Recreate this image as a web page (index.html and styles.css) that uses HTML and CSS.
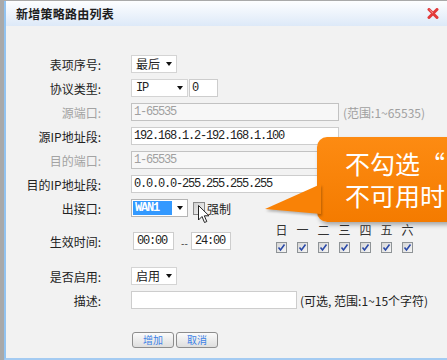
FILE: index.html
```html
<!DOCTYPE html>
<html lang="zh-CN">
<head>
    <meta charset="UTF-8">
    <title>新增策略路由列表</title>
    <link rel="stylesheet" href="styles.css">
</head>
<body>

<div class="dialog">
    <div class="titlebar">
        <span class="title">新增策略路由列表</span>
        <svg class="close" width="12" height="11" viewBox="0 0 12 11">
            <path d="M2 1.5 L10 9.5 M10 1.5 L2 9.5" stroke="#e23a3a" stroke-width="3" stroke-linecap="round"/>
            <path d="M2.5 1.8 L6 5.2" stroke="#f59a9a" stroke-width="1"/>
        </svg>
    </div>

    <div class="form">
        <div class="row">
            <label class="lbl">表项序号:</label>
            <div class="select w46"><span>最后</span><i class="caret"></i></div>
        </div>
        <div class="row">
            <label class="lbl">协议类型:</label>
            <div class="select w57"><span class="mono">IP</span><i class="caret"></i></div>
            <input class="field w29" type="text" value="0">
        </div>
        <div class="row">
            <label class="lbl off">源端口:</label>
            <input class="field w208" type="text" value="1-65535" disabled>
            <span class="hint">(范围:1~65535)</span>
        </div>
        <div class="row">
            <label class="lbl">源IP地址段:</label>
            <input class="field w208" type="text" value="192.168.1.2-192.168.1.100">
        </div>
        <div class="row">
            <label class="lbl off">目的端口:</label>
            <input class="field w208" type="text" value="1-65535" disabled>
        </div>
        <div class="row">
            <label class="lbl">目的IP地址段:</label>
            <input class="field w208" type="text" value="0.0.0.0-255.255.255.255">
        </div>
        <div class="row">
            <label class="lbl">出接口:</label>
            <div class="select w57 active"><span class="mono picked">WAN1</span><i class="caret"></i></div>
            <span class="box"></span>
            <span class="force">强制</span>
        </div>

        <div class="row time-row">
            <label class="lbl">生效时间:</label>
            <input class="field time" type="text" value="00:00">
            <span class="dash">--</span>
            <input class="field time" type="text" value="24:00">
            <div class="days">
                <span>日</span><span>一</span><span>二</span><span>三</span><span>四</span><span>五</span><span>六</span>
                <i class="chk"><svg width="9" height="9" viewBox="0 0 9 9"><path d="M1.5 4.5 L3.5 7 L7.5 1.5" fill="none" stroke="#2b4aa8" stroke-width="1.6"/></svg></i>
                <i class="chk"><svg width="9" height="9" viewBox="0 0 9 9"><path d="M1.5 4.5 L3.5 7 L7.5 1.5" fill="none" stroke="#2b4aa8" stroke-width="1.6"/></svg></i>
                <i class="chk"><svg width="9" height="9" viewBox="0 0 9 9"><path d="M1.5 4.5 L3.5 7 L7.5 1.5" fill="none" stroke="#2b4aa8" stroke-width="1.6"/></svg></i>
                <i class="chk"><svg width="9" height="9" viewBox="0 0 9 9"><path d="M1.5 4.5 L3.5 7 L7.5 1.5" fill="none" stroke="#2b4aa8" stroke-width="1.6"/></svg></i>
                <i class="chk"><svg width="9" height="9" viewBox="0 0 9 9"><path d="M1.5 4.5 L3.5 7 L7.5 1.5" fill="none" stroke="#2b4aa8" stroke-width="1.6"/></svg></i>
                <i class="chk"><svg width="9" height="9" viewBox="0 0 9 9"><path d="M1.5 4.5 L3.5 7 L7.5 1.5" fill="none" stroke="#2b4aa8" stroke-width="1.6"/></svg></i>
                <i class="chk"><svg width="9" height="9" viewBox="0 0 9 9"><path d="M1.5 4.5 L3.5 7 L7.5 1.5" fill="none" stroke="#2b4aa8" stroke-width="1.6"/></svg></i>
            </div>
        </div>

        <div class="row enable-row">
            <label class="lbl">是否启用:</label>
            <div class="select w46"><span>启用</span><i class="caret"></i></div>
        </div>
        <div class="row">
            <label class="lbl">描述:</label>
            <input class="field w166" type="text" value="">
            <span class="note">(可选, 范围:1~15个字符)</span>
        </div>

        <div class="buttons">
            <button type="button">增加</button>
            <button type="button">取消</button>
        </div>
    </div>

    <!-- 提示气泡 -->
    <div class="callout">
        <svg class="pointer" width="60" height="36" viewBox="0 0 60 36">
            <polygon points="58,3 2,28 58,33" fill="#f98206"/>
        </svg>
        <p>不勾选“</p>
        <p>不可用时</p>
    </div>

    <svg class="cursor" width="12" height="19" viewBox="0 0 12 19">
        <path d="M0.5 0.5 L0.5 15 L4 11.5 L6.5 17.5 L8.8 16.5 L6.3 10.8 L11 10.8 Z" fill="#fff" stroke="#222" stroke-width="1" stroke-linejoin="round"/>
    </svg>
</div>

</body>
</html>
```

FILE: styles.css
```css
body {
    margin: 0;
    padding-top: 1px;
    height: 359px;
    overflow: hidden;
    background-color: #a9a9a9;
    font-family: "Noto Sans CJK SC", sans-serif;
    font-size: 12px;
    color: #222;
}
.dialog {
    position: relative;
    height: 357px;
    margin-left: 4px;
    border-left: 2px solid #92c3f0;
    border-bottom: 2px solid #a4cbf2;
    background-color: #f2f2f2;
    overflow: hidden;
}
.titlebar {
    display: flex;
    align-items: center;
    height: 25px;
    padding-left: 10px;
    background: linear-gradient(#fdfeff, #dde9f8);
}
.title {
    font-weight: bold;
    letter-spacing: 0.25px;
    color: #1e1e1e;
}
.close {
    margin-left: auto;
    margin-right: 8px;
}
.form {
    padding-top: 26px;
}
.row {
    display: flex;
    align-items: center;
    height: 24px;
}
.lbl {
    width: 95px;
    margin-right: 30px;
    text-align: right;
    white-space: nowrap;
}
.lbl.off {
    color: #a3a3a3;
}
.mono {
    font-family: "Liberation Mono", monospace;
    letter-spacing: -1.2px;
}
.field {
    box-sizing: border-box;
    height: 18px;
    margin: 0;
    padding: 0 2px;
    border: 1px solid #cdcdcd;
    background-color: #fff;
    font-family: "Liberation Mono", monospace;
    font-size: 12px;
    line-height: 16px;
    letter-spacing: -1.2px;
    color: #222;
    outline: none;
    appearance: none;
    border-radius: 0;
}
.field:disabled {
    background-color: #f7f7f7;
    border-color: #c2c2c2;
    color: #a0a0a0;
}
.w29 { width: 29px; margin-left: 1px; }
.w166 { width: 166px; }
.w208 { width: 208px; }
.w46 { width: 46px; }
.w57 { width: 57px; }
.select {
    box-sizing: border-box;
    display: flex;
    align-items: center;
    justify-content: space-between;
    height: 18px;
    padding: 0 4px;
    border: 1px solid #d4d4d4;
    background-color: #fff;
    line-height: 16px;
}
.caret {
    width: 0;
    height: 0;
    border-left: 3px solid transparent;
    border-right: 3px solid transparent;
    border-top: 4px solid #111;
}
.select.active {
    padding-left: 1px;
    border-color: #b5b5b5;
}
.picked {
    box-sizing: border-box;
    width: 39px;
    height: 14px;
    padding-left: 2px;
    line-height: 14px;
    background-color: #3399ff;
    color: #fff;
    font-weight: bold;
}
.hint {
    margin-left: 4px;
    color: #a0a0a0;
    white-space: nowrap;
}
.box {
    box-sizing: border-box;
    width: 12px;
    height: 13px;
    margin-left: 5px;
    border: 1px solid #8a8a8a;
    background: linear-gradient(135deg, #cfcfcf, #f4f4f4);
}
.force {
    margin-left: 2px;
}
.time-row {
    height: 42px;
}
.time {
    width: 41px;
    margin-left: 2px;
    padding-left: 3px;
}
.time + .dash + .time {
    width: 40px;
    margin-left: 0;
}
.dash {
    width: 11px;
    margin-left: 6px;
    margin-top: 8px;
    font-family: "Liberation Mono", monospace;
    font-size: 9px;
    letter-spacing: -1.8px;
    color: #333;
}
.days {
    display: grid;
    grid-template-columns: repeat(7, 21px);
    row-gap: 5px;
    justify-items: center;
    align-self: flex-start;
    margin-top: 3px;
    margin-left: 40px;
    line-height: 14px;
    color: #333;
}
.chk {
    box-sizing: border-box;
    display: flex;
    align-items: center;
    justify-content: center;
    width: 11px;
    height: 11px;
    border: 1px solid #8e9396;
    background: linear-gradient(135deg, #d6d6d6, #f6f6f6);
}
.enable-row {
    margin-top: 2px;
}
.note {
    margin-left: 3px;
    white-space: nowrap;
}
.buttons {
    display: flex;
    gap: 2px;
    margin-top: 20px;
    padding-left: 126px;
}
.buttons button {
    width: 42px;
    height: 16px;
    padding: 0;
    border: 1px solid #8d8d8d;
    border-radius: 3px;
    background: linear-gradient(#fbfbfb, #dedede);
    font-family: "Noto Sans CJK SC", sans-serif;
    font-size: 10px;
    line-height: 14px;
    color: #3d82e6;
}
.callout {
    position: absolute;
    left: 311px;
    top: 136px;
    width: 160px;
    height: 85px;
    box-sizing: border-box;
    padding: 10px 0 0 28px;
    border-radius: 10px;
    background: linear-gradient(#fd8b12, #f47b00);
    box-shadow: 2px 3px 4px rgba(0, 0, 0, 0.3);
    color: #fff;
    font-size: 25px;
    line-height: 32px;
    white-space: nowrap;
}
.callout p {
    margin: 0;
}
.pointer {
    position: absolute;
    left: -54px;
    top: 44px;
    filter: drop-shadow(1px 2px 1px rgba(0, 0, 0, 0.25));
}
.cursor {
    position: absolute;
    left: 192px;
    top: 204px;
}
```
